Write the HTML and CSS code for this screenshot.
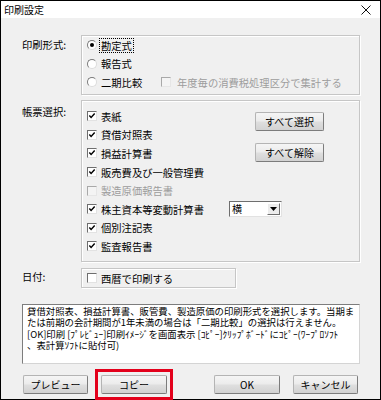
FILE: index.html
```html
<!DOCTYPE html>
<html lang="ja">
<head>
<meta charset="utf-8">
<link rel="stylesheet" href="styles.css">
</head>
<body>
<div class="window">
  <div class="titlebar">
    <span class="title">印刷設定</span>
    <svg class="close" width="10" height="10" viewBox="0 0 10 10"><path d="M0.5 0.5 L9.5 9.5 M9.5 0.5 L0.5 9.5" stroke="#111" stroke-width="1" fill="none"/></svg>
  </div>
  <div class="content">
    <div class="row row-format">
      <div class="label l-format">印刷形式:</div>
      <div class="group g-format">
        <div class="opt"><span class="radio on"></span><span class="focus">勘定式</span></div>
        <div class="opt"><span class="radio"></span><span>報告式</span></div>
        <div class="opt"><span class="radio"></span><span class="w-kiki">二期比較</span><span class="check disabled"></span><span class="dis-text">年度毎の消費税処理区分で集計する</span></div>
      </div>
    </div>

    <div class="row row-forms">
      <div class="label l-forms">帳票選択:</div>
      <div class="group g-forms">
        <div class="opt r1"><span class="check on"><svg viewBox="0 0 9 9"><path d="M1.5 4 L3.5 6.2 L7.5 1.8" stroke="#000" stroke-width="1.6" fill="none"/></svg></span><span>表紙</span></div>
        <div class="opt r2"><span class="check on"><svg viewBox="0 0 9 9"><path d="M1.5 4 L3.5 6.2 L7.5 1.8" stroke="#000" stroke-width="1.6" fill="none"/></svg></span><span>貸借対照表</span></div>
        <div class="opt r3"><span class="check on"><svg viewBox="0 0 9 9"><path d="M1.5 4 L3.5 6.2 L7.5 1.8" stroke="#000" stroke-width="1.6" fill="none"/></svg></span><span>損益計算書</span></div>
        <div class="opt r4"><span class="check on"><svg viewBox="0 0 9 9"><path d="M1.5 4 L3.5 6.2 L7.5 1.8" stroke="#000" stroke-width="1.6" fill="none"/></svg></span><span>販売費及び一般管理費</span></div>
        <div class="opt r5"><span class="check disabled"></span><span class="dis-text">製造原価報告書</span></div>
        <div class="opt r6 wide"><span class="check on"><svg viewBox="0 0 9 9"><path d="M1.5 4 L3.5 6.2 L7.5 1.8" stroke="#000" stroke-width="1.6" fill="none"/></svg></span><span class="w-kabu">株主資本等変動計算書</span>
          <span class="combo"><span class="combo-text">横</span><span class="combo-btn"><svg width="7" height="4" viewBox="0 0 7 4"><path d="M0 0 H7 L3.5 4 Z" fill="#000"/></svg></span></span>
        </div>
        <div class="opt r7"><span class="check on"><svg viewBox="0 0 9 9"><path d="M1.5 4 L3.5 6.2 L7.5 1.8" stroke="#000" stroke-width="1.6" fill="none"/></svg></span><span>個別注記表</span></div>
        <div class="opt r8"><span class="check on"><svg viewBox="0 0 9 9"><path d="M1.5 4 L3.5 6.2 L7.5 1.8" stroke="#000" stroke-width="1.6" fill="none"/></svg></span><span>監査報告書</span></div>
        <div class="side-buttons">
          <button class="btn btn-side">すべて選択</button>
          <button class="btn btn-side">すべて解除</button>
        </div>
      </div>
    </div>

    <div class="row row-date">
      <div class="label l-date">日付:</div>
      <div class="group g-date">
        <div class="opt"><span class="check"></span><span>西暦で印刷する</span></div>
      </div>
    </div>

    <div class="desc"><div class="line">貸借対照表、損益計算書、販管費、製造原価の印刷形式を選択します。当期ま</div><div class="line">たは前期の会計期間が1年未満の場合は「二期比較」の選択は行えません。</div><div class="line">[OK]印刷 [ﾌﾟﾚﾋﾞｭｰ]印刷ｲﾒｰｼﾞを画面表示 [ｺﾋﾟｰ]ｸﾘｯﾌﾟﾎﾞｰﾄﾞにｺﾋﾟｰ(ﾜｰﾌﾟﾛｿﾌﾄ</div><div class="line">、表計算ｿﾌﾄに貼付可)</div></div>

    <div class="buttons">
      <button class="btn b-preview">プレビュー</button>
      <span class="highlight"><button class="btn b-copy">コピー</button></span>
      <button class="btn b-ok">OK</button>
      <button class="btn b-cancel">キャンセル</button>
    </div>
  </div>
</div>
</body>
</html>
```

FILE: styles.css
```css
* { box-sizing: border-box; }
html, body { margin: 0; padding: 0; }
body {
  font-family: "Noto Sans CJK JP", "Noto Sans", sans-serif;
  font-size: 10px;
  color: #000;
  background: #fff;
}
.window {
  width: 381px;
  height: 400px;
  border: 1px solid #000;
  background: #f0f0f0;
  display: flex;
  flex-direction: column;
}
.titlebar {
  height: 17px;
  flex: none;
  background: #fff;
  display: flex;
  align-items: center;
  justify-content: space-between;
  padding: 0 9px 0 3px;
}
.title { font-size: 10px; line-height: 17px; }
.close { display: block; }

.content {
  flex: 1;
  padding: 17px 20px 0 21px;
  display: flex;
  flex-direction: column;
}
.row { display: flex; }
.label {
  width: 59px;
  flex: none;
  line-height: 18px;
  font-size: 10.3px;
}
.l-format { padding-top: 1px; }
.l-forms { padding-top: 3px; }
.l-date { padding-top: 0; }

.group {
  flex: 1;
  border: 1px solid #c6c6c6;
  box-shadow: inset 1px 1px 0 #fff, 1px 1px 0 #fff;
}
.opt {
  display: flex;
  align-items: center;
  height: 18.5px;
  font-size: 10.3px;
  white-space: nowrap;
}
.g-format {
  height: 60px;
  padding: 0 0 0 5px;
}
.radio {
  width: 10px;
  height: 10px;
  border-radius: 50%;
  background: #fff;
  border: 1px solid;
  border-color: #7a7a7a #dcdcdc #dcdcdc #7a7a7a;
  margin-right: 4px;
  display: inline-flex;
  align-items: center;
  justify-content: center;
  flex: none;
}
.radio.on::after {
  content: "";
  width: 4px;
  height: 4px;
  border-radius: 50%;
  background: #000;
}
.focus {
  outline: 1px dotted #000;
  outline-offset: 0;
  padding: 0 1px;
  margin-left: -1px;
  line-height: 13px;
}
.w-kiki { width: 60px; }
.check {
  width: 10px;
  height: 10px;
  background: #fff;
  border: 1px solid;
  border-color: #6e6e6e #e2e2e2 #e2e2e2 #6e6e6e;
  margin-right: 4px;
  flex: none;
  display: inline-flex;
}
.check svg { width: 8px; height: 8px; }
.check.disabled {
  border-color: #a9a9a9 #e6e6e6 #e6e6e6 #a9a9a9;
  background: #f4f4f4;
}
.dis-text { color: #9d9d9d; }
.g-format .check.disabled { margin-right: 6px; }

.row-forms { margin-top: 5px; }
.g-forms {
  height: 162px;
  padding: 6px 35px 4px 5px;
  display: grid;
  grid-template-columns: 1fr 69px;
  grid-template-rows: repeat(8, 18.6px);
}
.g-forms .opt { height: 18.6px; grid-column: 1; }
.r1 { grid-row: 1; } .r2 { grid-row: 2; } .r3 { grid-row: 3; } .r4 { grid-row: 4; }
.r5 { grid-row: 5; } .r6 { grid-row: 6; } .r7 { grid-row: 7; } .r8 { grid-row: 8; }
.g-forms .opt.wide { grid-column: 1 / -1; }
.w-kabu { width: 128px; }
.side-buttons {
  grid-column: 2;
  grid-row: 1 / 5;
  display: flex;
  flex-direction: column;
  gap: 12px;
  padding-top: 5px;
}
.btn {
  font-family: "Noto Sans CJK JP", "Noto Sans", sans-serif;
  font-size: 10px;
  color: #000;
  height: 19px;
  padding: 0;
  border: 1px solid;
  border-color: #b4b4b4 #7c7c7c #7c7c7c #b4b4b4;
  border-radius: 2px;
  background: linear-gradient(#f5f5f5 0%, #ececec 45%, #dedede 55%, #d2d2d2 100%);
  line-height: 17px;
  text-align: center;
}
.btn-side { width: 69px; }

.combo {
  width: 53px;
  height: 16px;
  background: #fff;
  border: 1px solid;
  border-color: #6e6e6e #e2e2e2 #e2e2e2 #6e6e6e;
  display: flex;
  align-items: center;
  justify-content: space-between;
  padding: 1px;
}
.combo-text { padding-left: 1px; font-size: 10px; line-height: 12px; }
.combo-btn {
  width: 13px;
  height: 12px;
  background: #ececec;
  border: 1px solid;
  border-color: #fff #6e6e6e #6e6e6e #fff;
  display: flex;
  align-items: center;
  justify-content: center;
}
.combo-btn svg { display: block; }

.row-date { margin-top: 6px; }
.g-date {
  flex: none;
  width: 155px;
  height: 20px;
  padding: 0 0 0 5px;
}
.g-date .opt { height: 18px; }

.desc {
  margin-top: 16px;
  height: 60px;
  background: #fff;
  border: 1px solid;
  border-color: #7d7d7d #d4d4d4 #d4d4d4 #7d7d7d;
  padding: 1px 0 0 4px;
  font-size: 9.4px;
  white-space: nowrap;
  overflow: hidden;
}
.line {
  height: 11.3px;
  line-height: 11.3px;
}

.buttons {
  margin-top: 11px;
  display: flex;
  align-items: center;
}
.b-preview { width: 65px; margin-left: 1px; }
.highlight {
  display: block;
  margin: -6px 0 -6px 7px;
  padding: 3px;
  border: 3px solid #e3001b;
}
.b-copy { width: 66px; display: block; }
.b-ok { width: 66px; margin-left: 41px; }
.b-cancel { width: 65px; margin-left: 13px; }
```
